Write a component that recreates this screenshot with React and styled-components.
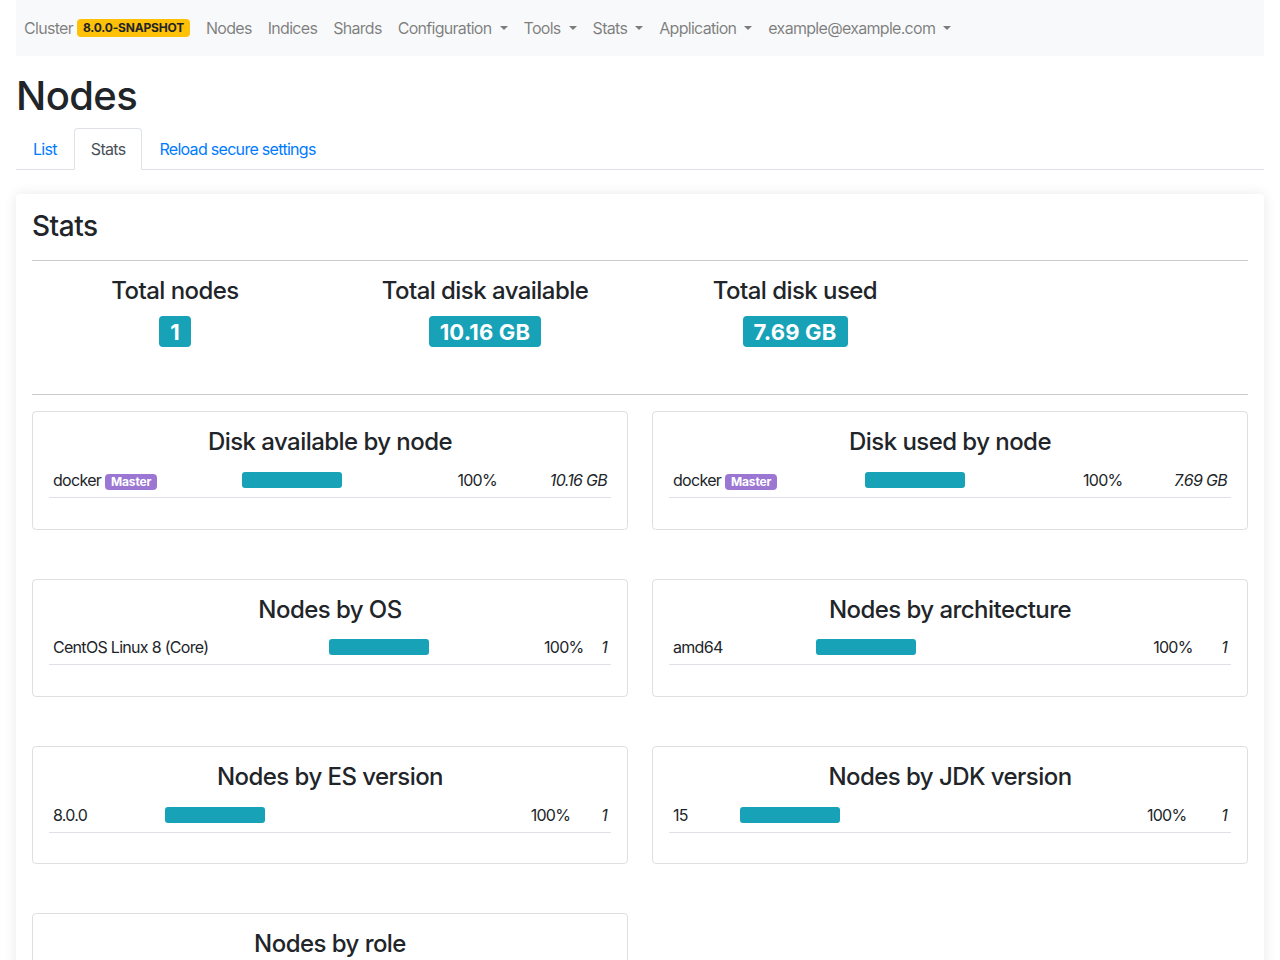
import React from "react";
import styled, { createGlobalStyle, css } from "styled-components";

const GlobalStyle = createGlobalStyle`
  html, body {
    margin: 0;
    padding: 0;
    background: #fff;
  }
  body {
    font-family: Inter, "Noto Sans", "Liberation Sans", sans-serif;
    font-size: 16px;
    line-height: 1.5;
    letter-spacing: -0.7px;
    color: #212529;
  }
  * {
    box-sizing: border-box;
  }
`;

const Page = styled.div`
  padding: 0 16px;
`;

const Navbar = styled.nav`
  display: flex;
  align-items: center;
  height: 56px;
  padding: 8px 0;
  background-color: #f8f9fa;
`;

const NavItem = styled.a`
  display: inline-flex;
  align-items: center;
  padding: 8px;
  color: rgba(0, 0, 0, 0.5);
  text-decoration: none;
  white-space: nowrap;
  ${({ $dropdown }) =>
    $dropdown &&
    css`
      &::after {
        content: "";
        display: inline-block;
        margin-left: 8px;
        border-top: 4.8px solid;
        border-right: 4.8px solid transparent;
        border-left: 4.8px solid transparent;
      }
    `}
`;

const Badge = styled.span`
  display: inline-block;
  font-weight: 700;
  line-height: 1;
  white-space: nowrap;
  border-radius: 4px;
  ${({ $variant }) =>
    $variant === "warning" &&
    css`
      margin-left: 4px;
      padding: 3px 6px;
      font-size: 12px;
      letter-spacing: -0.2px;
      background-color: #ffc107;
      color: #212529;
    `}
  ${({ $variant }) =>
    $variant === "master" &&
    css`
      margin-left: 4px;
      padding: 2px 6px;
      font-size: 12px;
      letter-spacing: -0.2px;
      background-color: #9b77d3;
      color: #fff;
    `}
  ${({ $variant }) =>
    $variant === "info" &&
    css`
      padding: 4.5px 11px;
      font-size: 22px;
      letter-spacing: 0.2px;
      background-color: #17a2b8;
      color: #fff;
    `}
`;

const Title = styled.h1`
  margin: 16px 0 8px;
  font-size: 40px;
  font-weight: 500;
  line-height: 1.2;
  letter-spacing: -0.6px;
`;

const Tabs = styled.ul`
  display: flex;
  margin: 0;
  padding: 0;
  list-style: none;
  border-bottom: 1px solid #dee2e6;
`;

const Tab = styled.li`
  margin-bottom: -1px;
`;

const TabLink = styled.a`
  display: block;
  padding: 8px 16px;
  border: 1px solid transparent;
  border-top-left-radius: 4px;
  border-top-right-radius: 4px;
  color: #007bff;
  text-decoration: none;
  ${({ $active }) =>
    $active &&
    css`
      color: #495057;
      background-color: #fff;
      border-color: #dee2e6 #dee2e6 #fff;
    `}
`;

const MainCard = styled.section`
  margin-top: 24px;
  padding: 16px;
  background: #fff;
  border-radius: 4px;
  box-shadow: 0 0 14px rgba(0, 0, 0, 0.09);
`;

const SectionTitle = styled.h3`
  margin: 0;
  font-size: 28px;
  font-weight: 500;
  line-height: 1.2;
  letter-spacing: -0.5px;
`;

const Rule = styled.hr`
  margin: 16px 0;
  border: 0;
  border-top: 1px solid rgba(0, 0, 0, 0.2);
`;

const Totals = styled.div`
  display: grid;
  grid-template-columns: repeat(3, 310px);
  margin: 0 -12px;
  padding-bottom: 31px;
`;

const Total = styled.div`
  display: flex;
  flex-direction: column;
  align-items: center;
`;

const TotalLabel = styled.h4`
  margin: 0 0 11px;
  font-size: 24px;
  font-weight: 500;
  line-height: 1.2;
  letter-spacing: -0.55px;
`;

const ChartGrid = styled.div`
  display: grid;
  grid-template-columns: 1fr 1fr;
  column-gap: 24px;
  row-gap: 49px;
`;

const ChartCard = styled.div`
  padding: 16px;
  border: 1px solid rgba(0, 0, 0, 0.125);
  border-radius: 4px;
`;

const ChartTitle = styled.h4`
  margin: 0 0 6px;
  font-size: 24px;
  font-weight: 500;
  line-height: 1.2;
  letter-spacing: -0.55px;
  text-align: center;
`;

const Table = styled.table`
  width: 100%;
  margin-bottom: 14.5px;
  border-collapse: collapse;
`;

const Cell = styled.td`
  padding: 5px 4px;
  border-bottom: 1px solid #dee2e6;
  vertical-align: middle;
  white-space: nowrap;
  ${({ $align }) => $align && css`text-align: ${$align};`}
  ${({ $italic }) => $italic && css`font-style: italic;`}
`;

const Bar = styled.div`
  height: 16px;
  border-radius: 3px;
  background-color: #17a2b8;
`;

const navItems = [
  { label: "Nodes" },
  { label: "Indices" },
  { label: "Shards" },
  { label: "Configuration", dropdown: true },
  { label: "Tools", dropdown: true },
  { label: "Stats", dropdown: true },
  { label: "Application", dropdown: true },
  { label: "example@example.com", dropdown: true },
];

const totals = [
  { label: "Total nodes", value: "1" },
  { label: "Total disk available", value: "10.16 GB" },
  { label: "Total disk used", value: "7.69 GB" },
];

const charts = [
  { title: "Disk available by node", rows: [{ name: "docker", master: true, pct: 100, value: "10.16 GB" }] },
  { title: "Disk used by node", rows: [{ name: "docker", master: true, pct: 100, value: "7.69 GB" }] },
  { title: "Nodes by OS", rows: [{ name: "CentOS Linux 8 (Core)", pct: 100, value: "1" }] },
  { title: "Nodes by architecture", rows: [{ name: "amd64", pct: 100, value: "1" }] },
  { title: "Nodes by ES version", rows: [{ name: "8.0.0", pct: 100, value: "1" }] },
  { title: "Nodes by JDK version", rows: [{ name: "15", pct: 100, value: "1" }] },
  { title: "Nodes by role", rows: [{ name: "master", pct: 100, value: "1" }] },
];

const Chart = ({ title, rows }) => (
  <ChartCard>
    <ChartTitle>{title}</ChartTitle>
    <Table>
      <tbody>
        {rows.map((row) => (
          <tr key={row.name}>
            <Cell>
              {row.name}
              {row.master && <Badge $variant="master">Master</Badge>}
            </Cell>
            <Cell>
              <Bar style={{ width: row.pct }} />
            </Cell>
            <Cell $align="right">{row.pct}%</Cell>
            <Cell $align="right" $italic>
              {row.value}
            </Cell>
          </tr>
        ))}
      </tbody>
    </Table>
  </ChartCard>
);

export default function App() {
  return (
    <>
      <GlobalStyle />
      <Page>
        <Navbar>
          <NavItem href="#">
            Cluster<Badge $variant="warning">8.0.0-SNAPSHOT</Badge>
          </NavItem>
          {navItems.map((item) => (
            <NavItem key={item.label} href="#" $dropdown={item.dropdown}>
              {item.label}
            </NavItem>
          ))}
        </Navbar>

        <Title>Nodes</Title>
        <Tabs>
          <Tab>
            <TabLink href="#">List</TabLink>
          </Tab>
          <Tab>
            <TabLink href="#" $active>
              Stats
            </TabLink>
          </Tab>
          <Tab>
            <TabLink href="#">Reload secure settings</TabLink>
          </Tab>
        </Tabs>

        <MainCard>
          <SectionTitle>Stats</SectionTitle>
          <Rule />
          <Totals>
            {totals.map((t) => (
              <Total key={t.label}>
                <TotalLabel>{t.label}</TotalLabel>
                <Badge $variant="info">{t.value}</Badge>
              </Total>
            ))}
          </Totals>
          <Rule />
          <ChartGrid>
            {charts.map((c) => (
              <Chart key={c.title} {...c} />
            ))}
          </ChartGrid>
        </MainCard>
      </Page>
    </>
  );
}
